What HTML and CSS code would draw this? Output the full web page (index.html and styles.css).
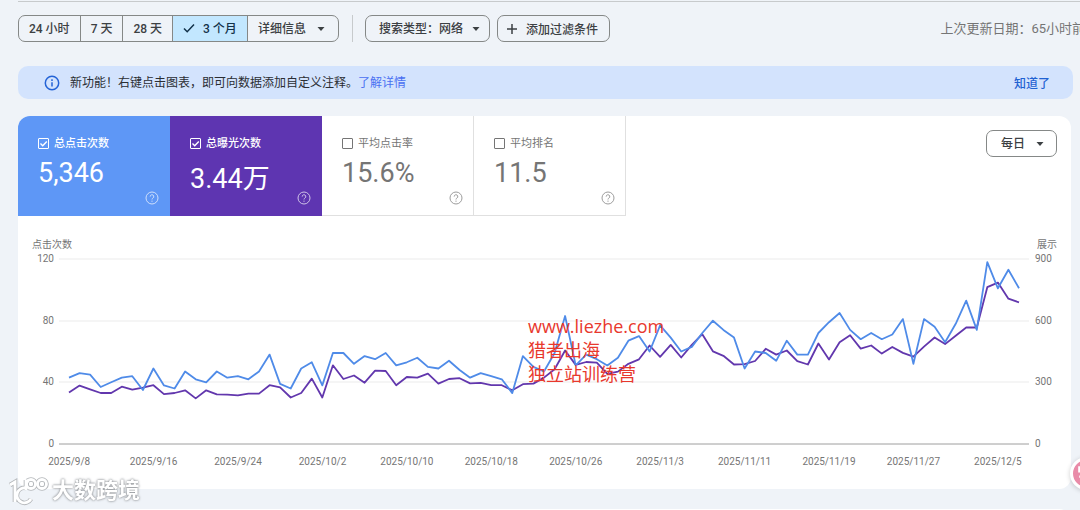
FILE: index.html
```html
<!DOCTYPE html>
<html lang="zh-CN">
  <head>
    <meta charset="UTF-8" />
    <meta name="viewport" content="width=device-width, initial-scale=1.0" />
    <title>效果</title>
    <link rel="stylesheet" href="styles.css" />
  </head>
  <body>
    <header class="toolbar">
      <div class="range-group">
        <button type="button" class="range">24 小时</button>
        <button type="button" class="range">7 天</button>
        <button type="button" class="range">28 天</button>
        <button type="button" class="range active">
          <svg class="check" viewBox="0 0 12 12"><path d="M1 6.5l3.2 3.2L11 2.5" /></svg>
          3 个月
        </button>
        <select class="range more" aria-label="详细信息">
          <option>详细信息</option>
        </select>
      </div>
      <span class="divider"></span>
      <div class="filters">
        <select class="chip search-type" aria-label="搜索类型">
          <option>搜索类型：网络</option>
        </select>
        <button type="button" class="chip">
          <svg class="plus" viewBox="0 0 12 12"><path d="M6 1v10M1 6h10" /></svg>
          添加过滤条件
        </button>
      </div>
      <span class="updated">上次更新日期：65小时前</span>
    </header>

    <div class="banner">
      <svg class="info" viewBox="0 0 16 16">
        <circle cx="8" cy="8" r="6.7" />
        <path d="M8 7.2v4.2M8 4.3v1.6" />
      </svg>
      <p>新功能！右键点击图表，即可向数据添加自定义注释。<a href="#">了解详情</a></p>
      <button type="button" class="dismiss">知道了</button>
    </div>

    <main class="card">
      <div class="card-top">
        <div class="metrics">
          <div class="metric clicks">
            <label><input type="checkbox" checked />总点击次数</label>
            <div class="value">5,346</div>
            <svg class="help" viewBox="0 0 14 14"><circle cx="7" cy="7" r="6" /><path d="M5.2 5.6a1.8 1.8 0 1 1 2.7 1.5c-.6.4-.9.7-.9 1.4M7 9.6v1.2" /></svg>
          </div>
          <div class="metric impressions">
            <label><input type="checkbox" checked />总曝光次数</label>
            <div class="value">3.44万</div>
            <svg class="help" viewBox="0 0 14 14"><circle cx="7" cy="7" r="6" /><path d="M5.2 5.6a1.8 1.8 0 1 1 2.7 1.5c-.6.4-.9.7-.9 1.4M7 9.6v1.2" /></svg>
          </div>
          <div class="metric">
            <label><input type="checkbox" />平均点击率</label>
            <div class="value">15.6%</div>
            <svg class="help" viewBox="0 0 14 14"><circle cx="7" cy="7" r="6" /><path d="M5.2 5.6a1.8 1.8 0 1 1 2.7 1.5c-.6.4-.9.7-.9 1.4M7 9.6v1.2" /></svg>
          </div>
          <div class="metric">
            <label><input type="checkbox" />平均排名</label>
            <div class="value">11.5</div>
            <svg class="help" viewBox="0 0 14 14"><circle cx="7" cy="7" r="6" /><path d="M5.2 5.6a1.8 1.8 0 1 1 2.7 1.5c-.6.4-.9.7-.9 1.4M7 9.6v1.2" /></svg>
          </div>
        </div>
        <select class="chip interval" aria-label="时间粒度">
          <option>每日</option>
        </select>
      </div>

      <div class="chart">
        <div class="axis-titles"><span>点击次数</span><span>展示</span></div>
        <div class="plot-row">
          <div class="ticks left"><span>120</span><span>80</span><span>40</span><span>0</span></div>
          <svg class="plot" viewBox="0 0 970 185" preserveAspectRatio="none">
            <path class="grid" d="M0 0H970M0 62H970M0 123H970" />
            <path class="baseline" d="M0 185H970" />
            <polyline id="impressionsLine" class="line impressions-line" />
            <polyline id="clicksLine" class="line clicks-line" />
          </svg>
          <div class="ticks right"><span>900</span><span>600</span><span>300</span><span>0</span></div>
        </div>
        <div class="dates">
          <span>2025/9/8</span><span>2025/9/16</span><span>2025/9/24</span>
          <span>2025/10/2</span><span>2025/10/10</span><span>2025/10/18</span>
          <span>2025/10/26</span><span>2025/11/3</span><span>2025/11/11</span>
          <span>2025/11/19</span><span>2025/11/27</span><span>2025/12/5</span>
        </div>
        <div class="site-mark">www.liezhe.com<br />猎者出海<br />独立站训练营</div>
      </div>
    </main>

    <section class="card next-card"></section>

    <div class="brand-mark">
      <svg class="brand-logo" viewBox="0 0 40 30">
        <g class="halo">
          <path d="M1 9l5-3v20M17 12a7.500 7.500 0 1 0 5 11M17 4v10M17 5h3" />
          <circle cx="22" cy="8" r="4.500" /><circle cx="33" cy="8" r="4.500" />
        </g>
        <g class="ink">
          <path d="M1 9l5-3v20M17 12a7.500 7.500 0 1 0 5 11M17 4v10M17 5h3" />
          <circle cx="22" cy="8" r="4.500" /><circle cx="33" cy="8" r="4.500" />
        </g>
      </svg>
      <span>大数跨境</span>
    </div>

    <button type="button" class="assistant" aria-label="助手">
      <svg viewBox="0 0 26 26"><path d="M6 7h5v4H6zM6 16h6M8 16v4" /></svg>
    </button>

    <script>
      const clicks = [
        43, 46, 45, 37, 40, 43, 44, 35, 49, 38, 36, 47, 42, 40, 47, 43, 44, 42,
        47, 58, 39, 36, 49, 53, 38, 59, 59, 52, 57, 55, 59, 51, 53, 56, 50, 49,
        54, 48, 43, 46, 44, 42, 33, 57, 50, 47, 59, 83, 51, 58, 55, 51, 56, 67,
        70, 60, 77, 69, 60, 63, 72, 80, 74, 69, 49, 60, 59, 54, 67, 58, 58, 72,
        79, 85, 74, 68, 72, 68, 71, 81, 52, 81, 76, 66, 78, 93, 74, 118, 101,
        113, 101,
      ];
      const impressions = [
        250, 284, 266, 248, 248, 279, 264, 274, 286, 243, 248, 261, 222, 261,
        242, 240, 237, 245, 245, 286, 276, 226, 248, 318, 226, 383, 316, 333,
        298, 357, 355, 286, 326, 323, 342, 294, 316, 320, 295, 297, 286, 286,
        261, 291, 294, 323, 364, 455, 385, 399, 396, 341, 352, 390, 412, 479,
        424, 482, 421, 482, 534, 451, 429, 387, 388, 404, 463, 435, 455, 403,
        387, 489, 411, 495, 529, 464, 479, 440, 472, 443, 425, 474, 518, 486,
        527, 567, 567, 763, 785, 707, 689,
      ];

      function drawLine(id, values, max) {
        const step = 950 / (values.length - 1);
        const points = values.map(
          (v, i) => `${(10 + i * step).toFixed(1)},${(185 - (v / max) * 185).toFixed(1)}`
        );
        document.getElementById(id).setAttribute("points", points.join(" "));
      }

      drawLine("clicksLine", clicks, 120);
      drawLine("impressionsLine", impressions, 900);
    </script>
  </body>
</html>
```
FILE: styles.css
```css
:root {
  --background: #eff3f8;
  --card: #ffffff;
  --border: #858887;
  --divider: #c7cacc;
  --text: #3c4043;
  --text-light: #757575;
  --clicks: #5e97f6;
  --impressions: #5e35b1;
}

* {
  margin: 0;
  padding: 0;
  box-sizing: border-box;
}

body {
  height: 100vh;
  overflow: hidden;
  padding: 1px 0 0 18px;
  font-family: Roboto, "Noto Sans CJK SC", sans-serif;
  font-size: 12px;
  color: var(--text);
  background-color: var(--background);
}

button,
select {
  font: inherit;
  color: inherit;
  background-color: transparent;
  border: none;
  cursor: pointer;
}

svg {
  fill: none;
  flex-shrink: 0;
}

/* toolbar */
.toolbar {
  display: flex;
  align-items: center;
  padding: 13px 0 24px;
  border-top: 1px solid var(--divider);
  white-space: nowrap;
}

.range-group {
  display: flex;
  height: 27px;
  border: 1px solid var(--border);
  border-radius: 7px;
  overflow: hidden;
}

.range {
  display: flex;
  align-items: center;
  padding: 0 10px 2px;
  font-weight: 500;
  border-right: 1px solid var(--border);
}

.range.active {
  gap: 8px;
  color: #12324a;
  background-color: #c2e7ff;
}

select {
  appearance: none;
  background-image: url("data:image/svg+xml,%3Csvg xmlns='http://www.w3.org/2000/svg' viewBox='0 0 8 4'%3E%3Cpath d='M0.5 0h7L4 4z' fill='%233c4043'/%3E%3C/svg%3E");
  background-repeat: no-repeat;
  background-position: right 13px center;
  background-size: 8px 4px;
}

.range.more {
  width: 90px;
  padding-bottom: 0;
  border-right: none;
}

.check,
.plus {
  width: 12px;
  height: 12px;
  stroke: currentColor;
  stroke-width: 1.5;
}

.divider {
  width: 1px;
  height: 27px;
  margin: 0 12px 0 13px;
  background-color: var(--divider);
}

.filters {
  display: flex;
  gap: 7px;
}

.chip {
  display: flex;
  align-items: center;
  gap: 8px;
  height: 27px;
  padding: 0 11px 0 8px;
  font-weight: 500;
  border: 1px solid var(--border);
  border-radius: 7px;
}

.search-type {
  width: 125px;
  padding: 0 0 0 13px;
  background-position: right 9px center;
}

.updated {
  margin-left: auto;
  margin-right: -5px;
  padding-bottom: 2px;
  font-size: 13px;
  color: var(--text-light);
}

/* notice */
.banner {
  display: flex;
  align-items: center;
  height: 33px;
  margin-right: 7px;
  padding: 0 23px 0 26px;
  border-radius: 10px;
  color: #2b2e33;
  background-color: #d3e3fd;
}

.banner p {
  padding-bottom: 2px;
}

.info {
  width: 16px;
  height: 16px;
  margin-right: 10px;
  stroke: #2463d6;
  stroke-width: 1.5;
}

.banner a {
  color: #4a70f2;
  text-decoration: none;
}

.dismiss {
  margin-left: auto;
  font-weight: 500;
  color: #1f62d2;
}

/* card */
.card {
  margin: 17px 9px 0 0;
  padding-bottom: 21px;
  border-radius: 12px;
  background-color: var(--card);
  overflow: hidden;
}

.next-card {
  height: 60px;
  margin-top: 20px;
}

.card-top {
  display: flex;
  justify-content: space-between;
  align-items: flex-start;
}

.metrics {
  display: flex;
}

.metric {
  position: relative;
  width: 152px;
  height: 100px;
  padding: 17px 0 0 20px;
  color: var(--text-light);
  box-shadow: inset -1px -1px 0 #e0e0e0;
}

.metric label {
  display: flex;
  align-items: center;
  gap: 5px;
  height: 18px;
  font-size: 11px;
}

.metric input {
  appearance: none;
  width: 11px;
  height: 11px;
  margin-top: 2px;
  color: inherit;
  border: 1px solid currentColor;
  border-radius: 1px;
}

.metric input:checked {
  background-image: url("data:image/svg+xml,%3Csvg xmlns='http://www.w3.org/2000/svg' viewBox='0 0 9 9'%3E%3Cpath d='M1.5 4.5l2.2 2.2L7.8 2.4' fill='none' stroke='white' stroke-width='1.4'/%3E%3C/svg%3E");
}

.metric .value {
  margin-top: 6px;
  font-size: 27px;
}

.metric.clicks,
.metric.impressions {
  color: #ffffff;
  box-shadow: none;
}

.metric.clicks {
  background-color: var(--clicks);
}

.metric.impressions {
  background-color: var(--impressions);
}

.metric.clicks label,
.metric.impressions label {
  font-weight: 500;
}

.help {
  position: absolute;
  right: 11px;
  bottom: 11px;
  width: 14px;
  height: 14px;
  stroke: currentColor;
  opacity: 0.7;
}

.interval {
  width: 71px;
  margin: 14px 14px 0 0;
  padding-left: 14px;
  background-position: right 12px center;
}

/* chart */
.chart {
  position: relative;
  padding-top: 23px;
  font-size: 10px;
  line-height: 12px;
  color: var(--text-light);
}

.axis-titles {
  display: flex;
  justify-content: space-between;
  padding: 0 14px;
}

.plot-row {
  display: flex;
  align-items: center;
  margin-top: 2px;
}

.ticks {
  display: flex;
  flex-direction: column;
  justify-content: space-between;
  height: 197px;
  width: 36px;
}

.ticks.left {
  text-align: right;
  margin-right: 5px;
}

.ticks.right {
  margin-left: 6px;
}

.plot {
  flex: 1;
  min-width: 0;
  height: 185px;
  overflow: visible;
}

.grid {
  stroke: #ebebeb;
}

.baseline {
  stroke: #9e9e9e;
}

.line {
  stroke-width: 1.8;
  stroke-linejoin: round;
  vector-effect: non-scaling-stroke;
}

.clicks-line {
  stroke: #4f8be8;
}

.impressions-line {
  stroke: #6237ad;
}

.dates {
  display: flex;
  margin: 6px 31px 0 9px;
}

.dates span {
  flex: 1;
  text-align: center;
}

.site-mark {
  position: absolute;
  left: 510px;
  top: 98px;
  font-family: "Open Sans", "Noto Sans CJK SC", sans-serif;
  font-size: 18px;
  line-height: 24px;
  color: #e8382d;
}

/* floating marks */
.brand-mark {
  position: fixed;
  left: 9px;
  bottom: 4px;
  display: flex;
  align-items: center;
  gap: 3px;
  font-size: 22px;
  line-height: 30px;
  font-weight: 700;
  color: #ffffff;
  text-shadow: 0 0 2px #8a8d91, 0 0 3px #a6a9ad;
}

.brand-logo {
  width: 40px;
  height: 30px;
  overflow: visible;
}

.halo {
  stroke: #b4b7ba;
  stroke-width: 4.6;
}

.ink {
  stroke: #ffffff;
  stroke-width: 2.8;
}

.assistant {
  position: fixed;
  right: -23px;
  bottom: 20px;
  width: 33px;
  height: 33px;
  border: 3px solid #ffffff;
  border-radius: 50%;
  background-color: #e98ba8;
  box-shadow: 0 1px 5px rgba(0, 0, 0, 0.2);
}

.assistant svg {
  display: block;
  stroke: #ffffff;
  stroke-width: 2;
}
```
